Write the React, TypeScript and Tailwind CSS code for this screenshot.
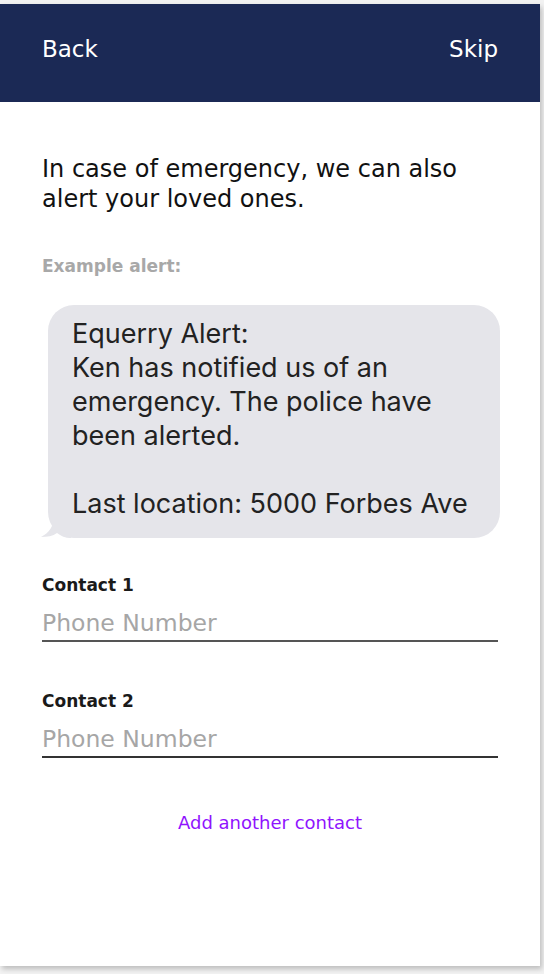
import React from "react";

const tahoma = { fontFamily: '"DejaVu Sans", Verdana, sans-serif' };
const sf = { fontFamily: 'Inter, "Liberation Sans", sans-serif' };

function ContactField({ label, lineColor }: { label: string; lineColor: string }) {
  return (
    <div className="flex flex-col">
      <label className="text-[17px] font-bold leading-[22px] text-[#1a1a1a]">{label}</label>
      <input
        placeholder="Phone Number"
        className={`mt-[12px] h-[34px] w-full border-b-2 bg-transparent pb-[2px] text-[23.5px] leading-[30px] text-[#333] outline-none placeholder:text-[#a6a6a6] ${lineColor}`}
        style={tahoma}
      />
    </div>
  );
}

function AlertBubble() {
  return (
    <div className="relative ml-[6px] mr-[-2px] mt-[29px]">
      <svg className="absolute bottom-0 left-[-7px]" width="30" height="22" viewBox="0 0 30 22">
        <path d="M13 0 L30 0 L30 22 C24 22 20 20 16 17 C12 20 6 21 0 21 C8 17 13 10 13 0 Z" fill="#e5e5ea" />
      </svg>
      <div
        className="relative rounded-[26px] bg-[#e5e5ea] px-[24px] pb-[17px] pt-[12px] text-[27px] leading-[34px] text-[#222]"
        style={sf}
      >
        <p>Equerry Alert:</p>
        <p>Ken has notified us of an emergency. The police have been alerted.</p>
        <p className="mt-[34px]">Last location: 5000 Forbes Ave</p>
      </div>
    </div>
  );
}

export default function App() {
  return (
    <div className="h-[974px] w-[544px] overflow-hidden bg-[#f2f2f2] pt-[4px]" style={tahoma}>
      <div className="flex h-[962px] w-[540px] flex-col bg-white shadow-[2px_3px_5px_rgba(0,0,0,0.22)]">
        <header className="flex h-[98px] items-center justify-between bg-[#1b2955] px-[42px] pb-[7px] text-[23px] text-white">
          <button>Back</button>
          <button>Skip</button>
        </header>

        <main className="flex flex-col px-[42px] pt-[52px]">
          <h1 className="text-[24px] leading-[30px] text-[#111]">
            In case of emergency, we can also alert your loved ones.
          </h1>
          <p className="mt-[42px] text-[17px] font-bold leading-[20px] text-[#a8a8a8]">Example alert:</p>

          <AlertBubble />

          <div className="mt-[36px] flex flex-col gap-[48px]">
            <ContactField label="Contact 1" lineColor="border-[#555]" />
            <ContactField label="Contact 2" lineColor="border-[#333]" />
          </div>

          <button className="mt-[51px] self-center text-[18px] text-[#9013fe]">Add another contact</button>
        </main>
      </div>
    </div>
  );
}
